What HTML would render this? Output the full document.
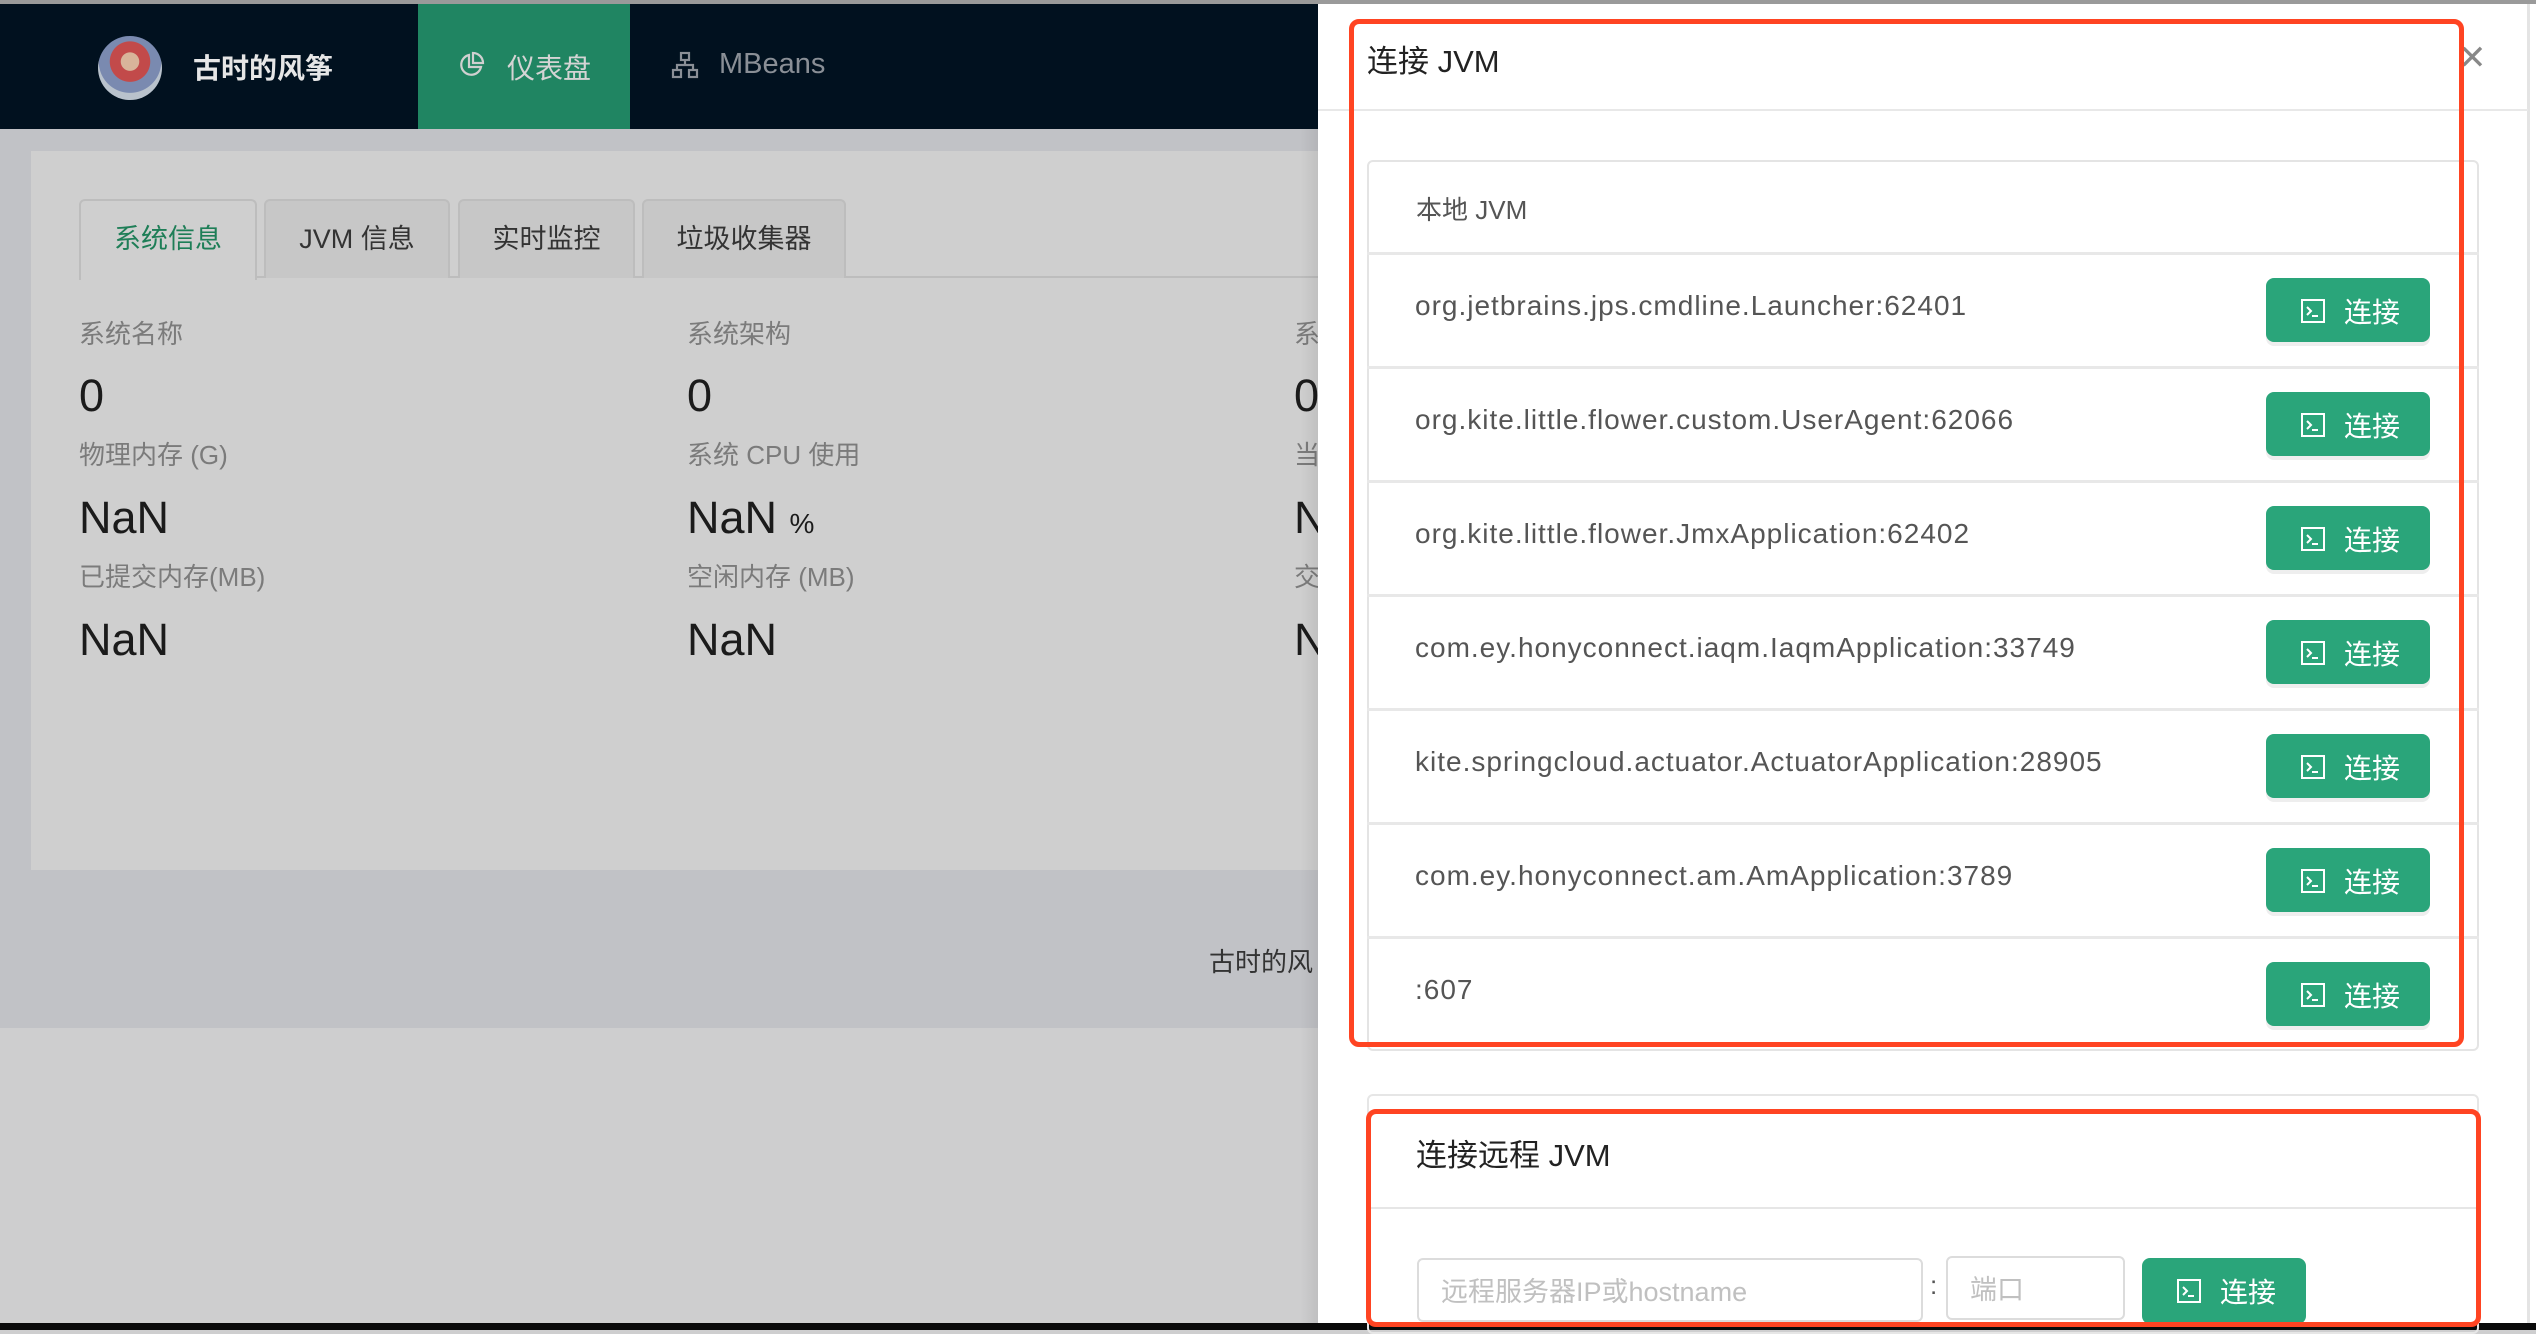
<!DOCTYPE html>
<html><head><meta charset="utf-8"><style>
*{margin:0;padding:0;box-sizing:border-box}
body{width:2536px;height:1330px;overflow:hidden;position:relative;background:#cececf;font-family:"Liberation Sans","Noto Sans CJK SC",sans-serif}
.a{position:absolute}
.hdr{left:0;top:0;width:1320px;height:129px;background:#01111f;border-top:4px solid #9a9a9a}
.nav{left:418px;top:4px;width:212px;height:125px;background:#208562}
.lbl{font-size:26px;color:#7b7b7b}
.val{font-size:45px;color:#1b1b1b}
.tab{top:199px;height:79px;border:2px solid #bdbdbd;border-bottom:none;border-radius:6px 6px 0 0;background:#c7c7c7;font-size:27px;color:#333;text-align:center;line-height:76px}
.row{left:1367px;width:1112px;height:114px;border-top:3px solid #e8e8e8}
.row span{position:absolute;left:48px;top:35px;font-size:28px;letter-spacing:1px;color:#555}
.btn{position:absolute;background:#2aa57a;border-radius:8px;color:#fff;font-size:28px;box-shadow:0 4px 0 #eeeeee}
.btn svg{position:absolute;left:34px;top:20px}
.btn b{position:absolute;left:78px;top:13px;font-weight:normal}
.red{border:5px solid #ff4422;border-radius:10px}
</style></head><body>
<div class="a hdr"></div>
<div class="a" style="left:98px;top:36px;width:64px;height:64px;border-radius:50%;background:radial-gradient(circle at 50% 40%,#d8b49a 0 18%,#c24a4a 19% 40%,#7a8ab0 41% 62%,#b9c2cc 63%)"></div>
<div class="a" style="left:193px;top:47px;font-size:28px;font-weight:bold;color:#e6e6e6">古时的风筝</div>
<div class="a nav"></div>
<svg class="a" style="left:457px;top:51px" width="28" height="28" viewBox="0 0 28 28" fill="none" stroke="#d0d0d0" stroke-width="2.2"><path d="M12 4A10 10 0 1 0 24 16H12Z"/><path d="M16 2A10 10 0 0 1 26 12H16Z"/></svg>
<div class="a" style="left:507px;top:47px;font-size:28px;color:#d4d4d4">仪表盘</div>
<svg class="a" style="left:671px;top:51px" width="28" height="28" viewBox="0 0 28 28" fill="none" stroke="#8a8f96" stroke-width="2.2"><rect x="10" y="2" width="8" height="7"/><rect x="2" y="19" width="8" height="7"/><rect x="18" y="19" width="8" height="7"/><path d="M14 9v5M6 19v-5h16v5"/></svg>
<div class="a" style="left:719px;top:48px;font-size:29px;color:#8a8f96">MBeans</div>
<div class="a" style="left:0;top:129px;width:1320px;height:899px;background:#c1c2c6"></div>
<div class="a" style="left:31px;top:151px;width:1300px;height:719px;background:#cfcfcf"></div>
<div class="a" style="left:79px;top:276px;width:1241px;height:2px;background:#bdbdbd"></div>
<div class="a tab" style="left:79px;width:178px;background:#cfcfcf;color:#1e7e57;height:81px">系统信息</div>
<div class="a tab" style="left:264px;width:186px">JVM 信息</div>
<div class="a tab" style="left:458px;width:177px">实时监控</div>
<div class="a tab" style="left:642px;width:204px">垃圾收集器</div>
<div class="a lbl" style="left:79px;top:314px">系统名称</div>
<div class="a lbl" style="left:687px;top:314px">系统架构</div>
<div class="a lbl" style="left:1294px;top:314px">系</div>
<div class="a val" style="left:79px;top:370px">0</div>
<div class="a val" style="left:687px;top:370px">0</div>
<div class="a val" style="left:1294px;top:370px">0</div>
<div class="a lbl" style="left:79px;top:435px">物理内存 (G)</div>
<div class="a lbl" style="left:687px;top:435px">系统 CPU 使用</div>
<div class="a lbl" style="left:1294px;top:435px">当</div>
<div class="a val" style="left:79px;top:492px">NaN</div>
<div class="a val" style="left:687px;top:492px">NaN <span style="font-size:28px">%</span></div>
<div class="a val" style="left:1294px;top:492px">N</div>
<div class="a lbl" style="left:79px;top:557px">已提交内存(MB)</div>
<div class="a lbl" style="left:687px;top:557px">空闲内存 (MB)</div>
<div class="a lbl" style="left:1294px;top:557px">交</div>
<div class="a val" style="left:79px;top:614px">NaN</div>
<div class="a val" style="left:687px;top:614px">NaN</div>
<div class="a val" style="left:1294px;top:614px">N</div>
<div class="a" style="left:1209px;top:942px;font-size:26px;color:#333">古时的风</div>
<div class="a" style="left:1300px;top:129px;width:20px;height:1196px;background:linear-gradient(90deg,rgba(0,0,0,0),rgba(0,0,0,.08))"></div>
<div class="a" style="left:0;top:1323px;width:2536px;height:7px;background:#0a0a0a"></div>
<!-- drawer -->
<div class="a" style="left:1318px;top:4px;width:1218px;height:1319px;background:#fff"></div>
<div class="a" style="left:1318px;top:0;width:1218px;height:4px;background:#9a9a9a"></div>
<div class="a" style="left:2527px;top:4px;width:3px;height:1319px;background:#e4e4e4"></div>
<div class="a" style="left:1367px;top:36px;font-size:31px;color:#222">连接 JVM</div>
<div class="a" style="left:2458px;top:38px;font-size:34px;color:#888;font-weight:300">✕</div>
<div class="a" style="left:1318px;top:109px;width:1210px;height:2px;background:#e8e8e8"></div>
<div class="a" style="left:1367px;top:160px;width:1112px;height:891px;border:2px solid #e4e4e4;border-radius:6px"></div>
<div class="a" style="left:1416px;top:190px;font-size:26px;color:#555">本地 JVM</div>
<div class="a row" style="top:252px"><span>org.jetbrains.jps.cmdline.Launcher:62401</span></div>
<div class="a row" style="top:366px"><span>org.kite.little.flower.custom.UserAgent:62066</span></div>
<div class="a row" style="top:480px"><span>org.kite.little.flower.JmxApplication:62402</span></div>
<div class="a row" style="top:594px"><span>com.ey.honyconnect.iaqm.IaqmApplication:33749</span></div>
<div class="a row" style="top:708px"><span>kite.springcloud.actuator.ActuatorApplication:28905</span></div>
<div class="a row" style="top:822px"><span>com.ey.honyconnect.am.AmApplication:3789</span></div>
<div class="a row" style="top:936px"><span>:607</span></div>
<div class="btn" style="left:2266px;top:278px;width:164px;height:64px"><svg width="26" height="26" viewBox="0 0 26 26" fill="none" stroke="#fff" stroke-width="2"><rect x="2" y="2" width="22" height="22"/><path d="M7 9l4 4-4 4M12 18h6"/></svg><b>连接</b></div>
<div class="btn" style="left:2266px;top:392px;width:164px;height:64px"><svg width="26" height="26" viewBox="0 0 26 26" fill="none" stroke="#fff" stroke-width="2"><rect x="2" y="2" width="22" height="22"/><path d="M7 9l4 4-4 4M12 18h6"/></svg><b>连接</b></div>
<div class="btn" style="left:2266px;top:506px;width:164px;height:64px"><svg width="26" height="26" viewBox="0 0 26 26" fill="none" stroke="#fff" stroke-width="2"><rect x="2" y="2" width="22" height="22"/><path d="M7 9l4 4-4 4M12 18h6"/></svg><b>连接</b></div>
<div class="btn" style="left:2266px;top:620px;width:164px;height:64px"><svg width="26" height="26" viewBox="0 0 26 26" fill="none" stroke="#fff" stroke-width="2"><rect x="2" y="2" width="22" height="22"/><path d="M7 9l4 4-4 4M12 18h6"/></svg><b>连接</b></div>
<div class="btn" style="left:2266px;top:734px;width:164px;height:64px"><svg width="26" height="26" viewBox="0 0 26 26" fill="none" stroke="#fff" stroke-width="2"><rect x="2" y="2" width="22" height="22"/><path d="M7 9l4 4-4 4M12 18h6"/></svg><b>连接</b></div>
<div class="btn" style="left:2266px;top:848px;width:164px;height:64px"><svg width="26" height="26" viewBox="0 0 26 26" fill="none" stroke="#fff" stroke-width="2"><rect x="2" y="2" width="22" height="22"/><path d="M7 9l4 4-4 4M12 18h6"/></svg><b>连接</b></div>
<div class="btn" style="left:2266px;top:962px;width:164px;height:64px"><svg width="26" height="26" viewBox="0 0 26 26" fill="none" stroke="#fff" stroke-width="2"><rect x="2" y="2" width="22" height="22"/><path d="M7 9l4 4-4 4M12 18h6"/></svg><b>连接</b></div>
<div class="a red" style="left:1349px;top:19px;width:1115px;height:1028px"></div>
<!-- remote -->
<div class="a" style="left:1367px;top:1094px;width:1112px;height:240px;border:2px solid #e6e6e6;border-radius:6px"></div>
<div class="a" style="left:1416px;top:1130px;font-size:31px;color:#222">连接远程 JVM</div>
<div class="a" style="left:1367px;top:1207px;width:1112px;height:2px;background:#e6e6e6"></div>
<div class="a" style="left:1417px;top:1258px;width:506px;height:64px;border:2px solid #dcdcdc;border-radius:6px;font-size:27px;color:#c0c0c0;padding:10px 0 0 22px">远程服务器IP或hostname</div>
<div class="a" style="left:1930px;top:1270px;font-size:26px;color:#555">:</div>
<div class="a" style="left:1946px;top:1256px;width:179px;height:64px;border:2px solid #dcdcdc;border-radius:6px;font-size:27px;color:#c0c0c0;padding:10px 0 0 22px">端口</div>
<div class="btn" style="left:2142px;top:1258px;width:164px;height:66px;box-shadow:none"><svg width="26" height="26" viewBox="0 0 26 26" fill="none" stroke="#fff" stroke-width="2"><rect x="2" y="2" width="22" height="22"/><path d="M7 9l4 4-4 4M12 18h6"/></svg><b>连接</b></div>
<div class="a red" style="left:1366px;top:1109px;width:1115px;height:218px"></div>
</body></html>
